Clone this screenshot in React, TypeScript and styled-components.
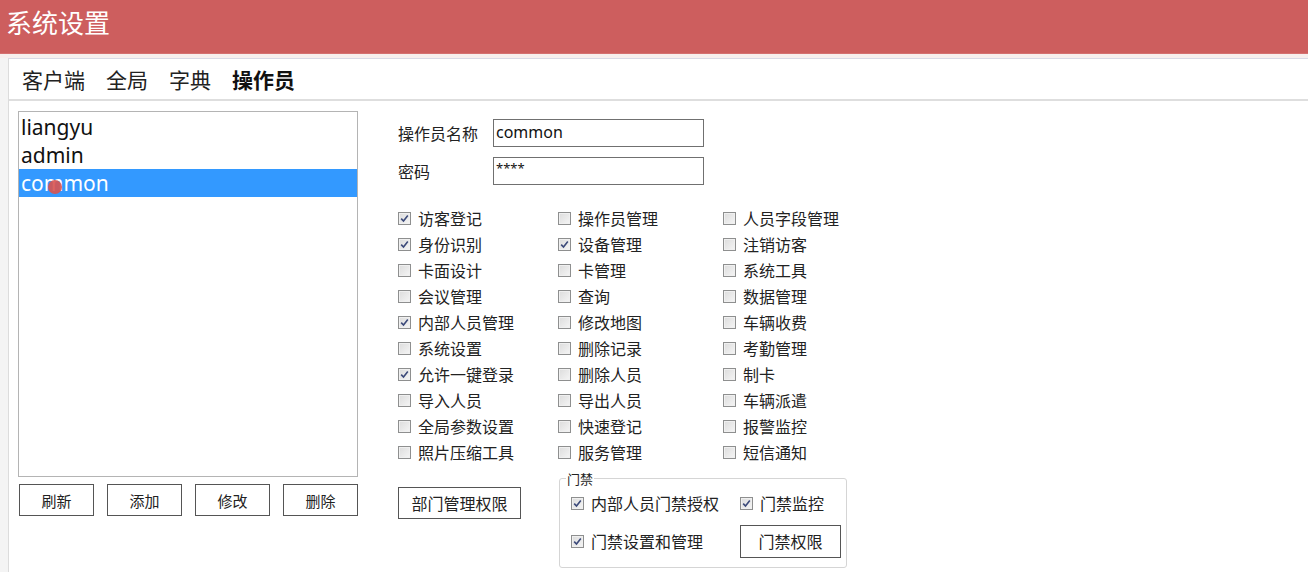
import React from "react";
import styled, { createGlobalStyle } from "styled-components";

const GlobalStyle = createGlobalStyle`
  html, body { margin: 0; padding: 0; }
  body {
    background: #f4f4f4;
    font-family: "Noto Sans CJK SC", "Noto Sans", sans-serif;
    color: #222;
    overflow: hidden;
  }
`;

const Page = styled.div`
  width: 1308px;
  height: 572px;
  display: flex;
  flex-direction: column;
`;

const Header = styled.div`
  height: 54px;
  background: #cd5e5e;
  color: #fff;
  font-size: 26px;
  line-height: 44px;
  padding-left: 6px;
  border-bottom: 1px solid #d47070;
  box-sizing: border-box;
`;

const Strip = styled.div`
  height: 4px;
  background: #f7efee;
`;

const Panel = styled.div`
  flex: 1;
  margin-left: 8px;
  background: #fff;
  border-left: 1px solid #dcdcdc;
  border-top: 1px solid #d9d9e6;
  display: flex;
  flex-direction: column;
  min-height: 0;
`;

const TabBar = styled.div`
  height: 42px;
  display: flex;
  align-items: center;
  gap: 21px;
  padding-left: 13px;
  border-bottom: 2px solid #dedede;
  box-sizing: border-box;
`;

const Tab = styled.span<{ $active?: boolean }>`
  font-size: 21px;
  font-weight: ${(p) => (p.$active ? 700 : 400)};
  color: ${(p) => (p.$active ? "#111" : "#222")};
  line-height: 1;
`;

const Body = styled.div`
  display: flex;
  gap: 40px;
  padding-left: 9px;
  padding-top: 10px;
`;

const LeftCol = styled.div`
  display: flex;
  flex-direction: column;
  gap: 7px;
`;

const List = styled.div`
  position: relative;
  width: 340px;
  height: 366px;
  border: 1px solid #b4b4b4;
  box-sizing: border-box;
  padding-top: 1px;
`;

const ListItem = styled.div<{ $selected?: boolean }>`
  height: 28px;
  line-height: 28px;
  padding-left: 2px;
  font-family: "Noto Sans", sans-serif;
  font-size: 21px;
  background: ${(p) => (p.$selected ? "#3399ff" : "transparent")};
  color: ${(p) => (p.$selected ? "#fff" : "#111")};
`;

const CursorDot = styled.span`
  position: absolute;
  left: 29px;
  top: 68px;
  width: 14px;
  height: 14px;
  border-radius: 50%;
  background: #d9534f;
  opacity: 0.9;
`;

const ButtonRow = styled.div`
  display: flex;
  gap: 13px;
  padding-left: 1px;
`;

const Button = styled.button<{ $w?: number; $h?: number }>`
  width: ${(p) => p.$w ?? 75}px;
  height: ${(p) => p.$h ?? 32}px;
  background: #fff;
  border: 1px solid #555;
  border-radius: 0;
  font-family: "Noto Sans CJK SC", sans-serif;
  font-size: 15px;
  color: #222;
  padding: 0;
`;

const Form = styled.div`
  display: flex;
  flex-direction: column;
  padding-top: 8px;
`;

const FieldRow = styled.div`
  display: flex;
  align-items: center;
  height: 28px;
  margin-bottom: 10px;
`;

const Label = styled.span`
  width: 95px;
  font-size: 16px;
`;

const Input = styled.div<{ $small?: boolean }>`
  width: 211px;
  height: 28px;
  border: 1px solid #707070;
  box-sizing: border-box;
  padding-left: 2px;
  font-family: "Noto Sans", sans-serif;
  font-size: ${(p) => (p.$small ? 13 : 16)}px;
  line-height: ${(p) => (p.$small ? 20 : 24)}px;
  color: #111;
`;

const CheckGrid = styled.div`
  display: grid;
  grid-template-columns: 160px 165px 130px;
  grid-auto-rows: 26px;
  margin-top: 10px;
`;

const CheckItem = styled.label`
  display: flex;
  align-items: center;
  gap: 7px;
  font-size: 16px;
  white-space: nowrap;
`;

const Box = styled.span`
  width: 11px;
  height: 11px;
  border: 1px solid #8e8f8f;
  background: linear-gradient(135deg, #dcdcdc, #f5f5f5);
  box-shadow: inset 0 0 0 1px #f0f0f0;
  display: inline-flex;
  align-items: center;
  justify-content: center;
  flex: none;
`;

const BottomRow = styled.div`
  display: flex;
  align-items: flex-start;
  gap: 38px;
  margin-top: 4px;
`;

const DeptButton = styled(Button)`
  margin-top: 18px;
  font-size: 16px;
`;

const Fieldset = styled.fieldset`
  margin: 0;
  width: 288px;
  box-sizing: border-box;
  border: 1px solid #d5d5d5;
  border-radius: 3px;
  padding: 0 0 3px 11px;
  display: grid;
  grid-template-columns: 169px 101px;
  grid-template-rows: 30px 46px;
  align-items: center;
`;

const Legend = styled.legend`
  font-size: 13px;
  padding: 0 1px;
  margin-left: -5px;
  color: #222;
`;

const SmallButton = styled(Button)`
  font-size: 16px;
`;

const Check: React.FC<{ checked?: boolean; label: string }> = ({ checked, label }) => (
  <CheckItem>
    <Box>
      {checked && (
        <svg width="9" height="9" viewBox="0 0 9 9">
          <path d="M1.2 4.6 L3.5 7 L7.8 1.6" fill="none" stroke="#3c4a7a" strokeWidth="1.6" />
        </svg>
      )}
    </Box>
    {label}
  </CheckItem>
);

const perms: [string, boolean][] = [
  ["访客登记", true], ["操作员管理", false], ["人员字段管理", false],
  ["身份识别", true], ["设备管理", true], ["注销访客", false],
  ["卡面设计", false], ["卡管理", false], ["系统工具", false],
  ["会议管理", false], ["查询", false], ["数据管理", false],
  ["内部人员管理", true], ["修改地图", false], ["车辆收费", false],
  ["系统设置", false], ["删除记录", false], ["考勤管理", false],
  ["允许一键登录", true], ["删除人员", false], ["制卡", false],
  ["导入人员", false], ["导出人员", false], ["车辆派遣", false],
  ["全局参数设置", false], ["快速登记", false], ["报警监控", false],
  ["照片压缩工具", false], ["服务管理", false], ["短信通知", false],
];

export default function App() {
  return (
    <Page>
      <GlobalStyle />
      <Header>系统设置</Header>
      <Strip />
      <Panel>
        <TabBar>
          <Tab>客户端</Tab>
          <Tab>全局</Tab>
          <Tab>字典</Tab>
          <Tab $active>操作员</Tab>
        </TabBar>
        <Body>
          <LeftCol>
            <List>
              <ListItem>liangyu</ListItem>
              <ListItem>admin</ListItem>
              <ListItem $selected>common</ListItem>
              <CursorDot />
            </List>
            <ButtonRow>
              <Button>刷新</Button>
              <Button>添加</Button>
              <Button>修改</Button>
              <Button>删除</Button>
            </ButtonRow>
          </LeftCol>
          <Form>
            <FieldRow>
              <Label>操作员名称</Label>
              <Input>common</Input>
            </FieldRow>
            <FieldRow>
              <Label>密码</Label>
              <Input $small>****</Input>
            </FieldRow>
            <CheckGrid>
              {perms.map(([l, c]) => (
                <Check key={l} label={l} checked={c} />
              ))}
            </CheckGrid>
            <BottomRow>
              <DeptButton $w={123} $h={32}>部门管理权限</DeptButton>
              <Fieldset>
                <Legend>门禁</Legend>
                <Check label="内部人员门禁授权" checked />
                <Check label="门禁监控" checked />
                <Check label="门禁设置和管理" checked />
                <SmallButton $w={101} $h={33}>门禁权限</SmallButton>
              </Fieldset>
            </BottomRow>
          </Form>
        </Body>
      </Panel>
    </Page>
  );
}
